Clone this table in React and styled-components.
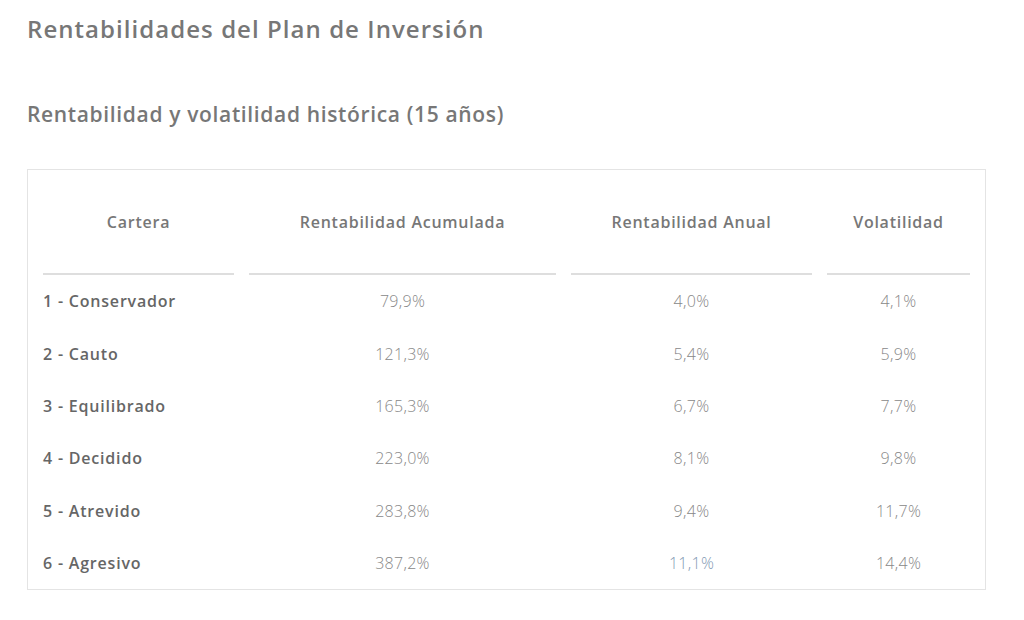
import React from 'react';
import styled, { createGlobalStyle } from 'styled-components';

const GlobalStyle = createGlobalStyle`
  body {
    margin: 0;
    background: #fff;
    font-family: "Open Sans", "Liberation Sans", sans-serif;
  }
`;

const Page = styled.div`
  padding: 12px 38px 0 27px;
`;

const Title = styled.h1`
  margin: 0;
  font-size: 24px;
  line-height: 34px;
  font-weight: 600;
  letter-spacing: 1.05px;
  color: #777;
`;

const Subtitle = styled.h2`
  margin: 53px 0 0;
  font-size: 21px;
  line-height: 30px;
  font-weight: 600;
  letter-spacing: 0.65px;
  color: #777;
`;

const Card = styled.div`
  margin-top: 40px;
  border: 1px solid #e4e4e4;
`;

const Table = styled.table`
  width: 100%;
  border-collapse: separate;
  border-spacing: 15px 0;
  font-size: 16px;
`;

const Th = styled.th`
  height: 103px;
  padding: 0;
  border-bottom: 2px solid #dedede;
  font-weight: 600;
  letter-spacing: 0.75px;
  color: #777;
  text-align: center;
  vertical-align: middle;
  width: ${(p) => p.$w}px;
`;

const Label = styled.td`
  height: 52.4px;
  padding: 0;
  font-weight: 600;
  letter-spacing: 0.8px;
  color: #666;
  text-align: left;
`;

const Value = styled.td`
  height: 52.4px;
  padding: 0;
  font-weight: 300;
  letter-spacing: 0.3px;
  color: ${(p) => (p.$link ? '#8299b3' : '#888')};
  text-align: center;
`;

const columns = [
  { name: 'Cartera', w: 191 },
  { name: 'Rentabilidad Acumulada', w: 307 },
  { name: 'Rentabilidad Anual', w: 241 },
  { name: 'Volatilidad', w: 143 },
];

const rows = [
  ['1 - Conservador', '79,9%', '4,0%', '4,1%'],
  ['2 - Cauto', '121,3%', '5,4%', '5,9%'],
  ['3 - Equilibrado', '165,3%', '6,7%', '7,7%'],
  ['4 - Decidido', '223,0%', '8,1%', '9,8%'],
  ['5 - Atrevido', '283,8%', '9,4%', '11,7%'],
  ['6 - Agresivo', '387,2%', '11,1%', '14,4%'],
];

export default function App() {
  return (
    <>
      <GlobalStyle />
      <Page>
        <Title>Rentabilidades del Plan de Inversión</Title>
        <Subtitle>Rentabilidad y volatilidad histórica (15 años)</Subtitle>
        <Card>
          <Table>
            <thead>
              <tr>
                {columns.map((c) => (
                  <Th key={c.name} $w={c.w}>
                    {c.name}
                  </Th>
                ))}
              </tr>
            </thead>
            <tbody>
              {rows.map(([label, acc, anual, vol]) => (
                <tr key={label}>
                  <Label>{label}</Label>
                  <Value>{acc}</Value>
                  <Value $link={anual === '11,1%'}>{anual}</Value>
                  <Value>{vol}</Value>
                </tr>
              ))}
            </tbody>
          </Table>
        </Card>
      </Page>
    </>
  );
}
